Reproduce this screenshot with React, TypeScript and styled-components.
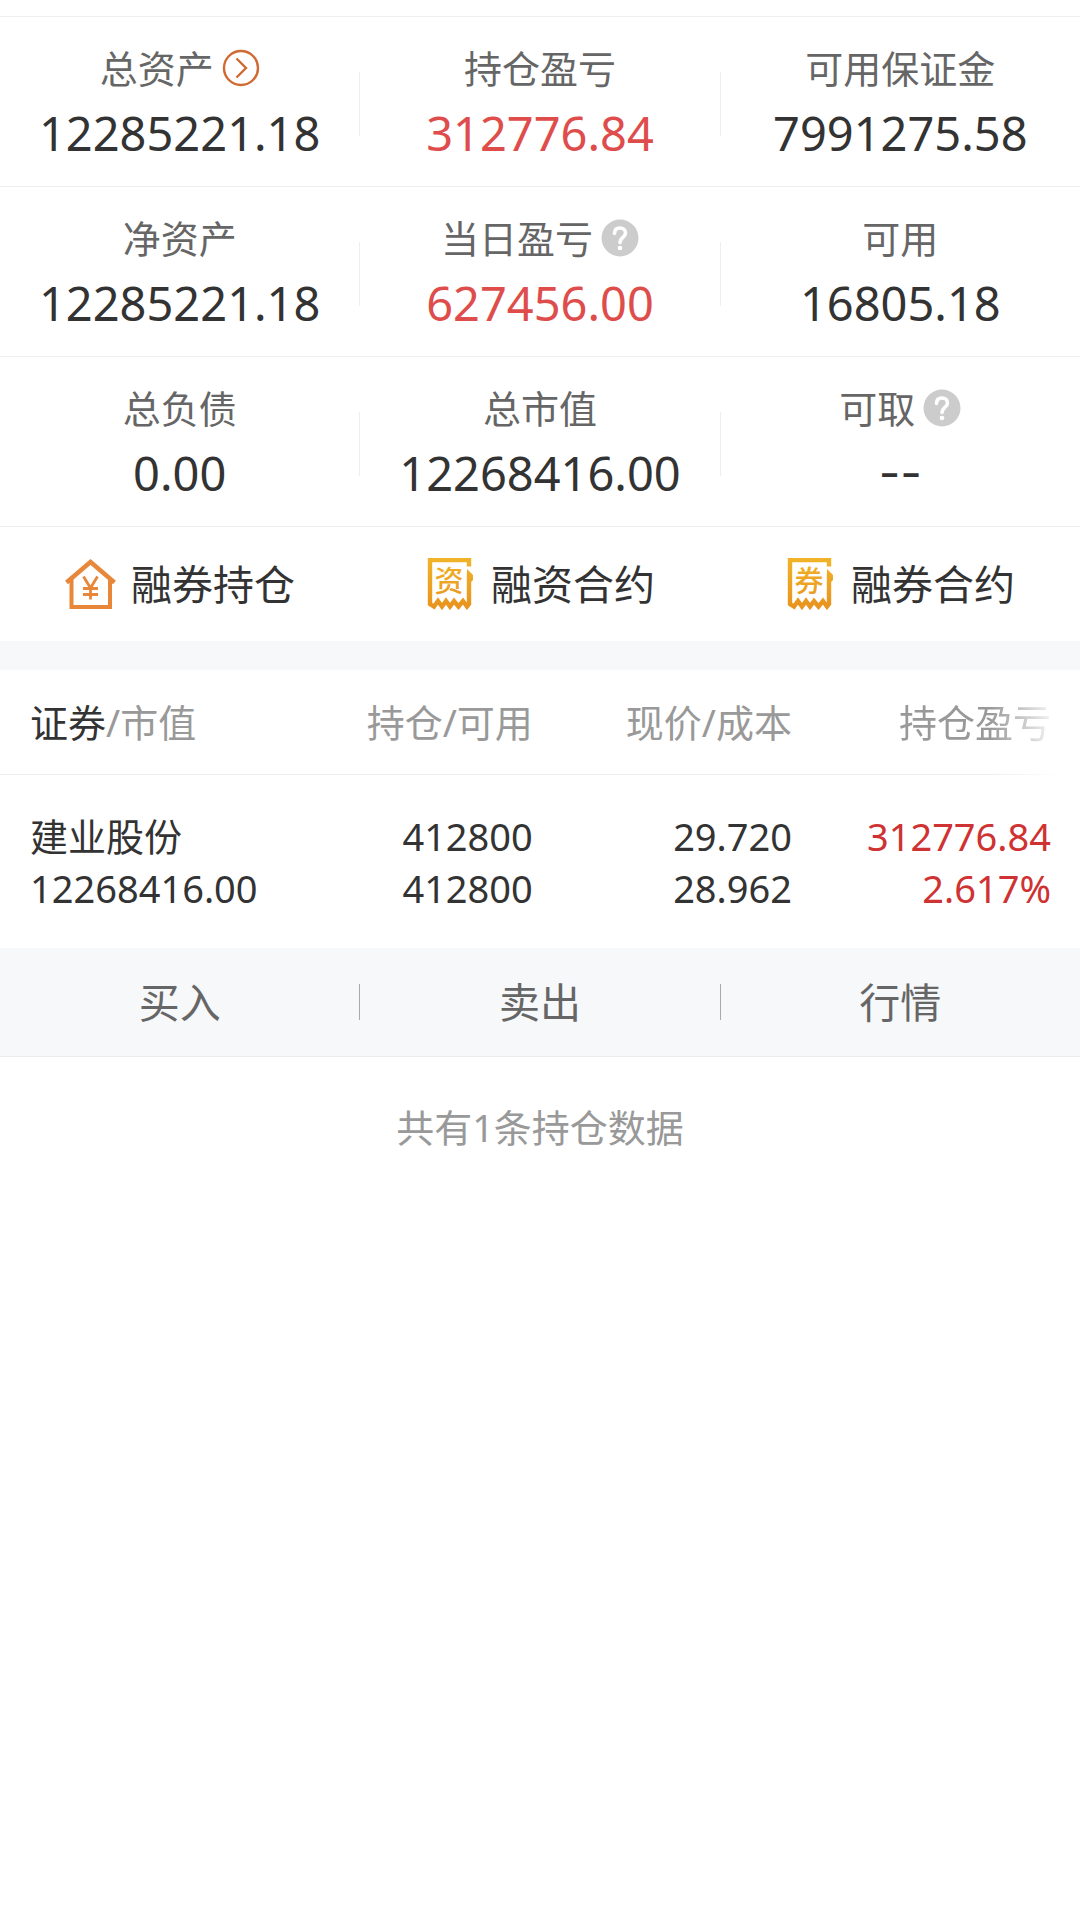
import React from "react";
import styled, { createGlobalStyle } from "styled-components";

const sans = `"Noto Sans", "Noto Sans CJK SC", sans-serif`;

const GlobalStyle = createGlobalStyle`
  *, *::before, *::after { box-sizing: border-box; }
  body {
    margin: 0;
    background: #fff;
    color: #333;
    font-family: ${sans};
    font-size: 38px;
    line-height: 44px;
  }
  button {
    margin: 0;
    padding: 0;
    border: 0;
    background: none;
    color: inherit;
    font: inherit;
    cursor: pointer;
  }
`;

const Page = styled.main`
  padding-top: 16px;
`;

const Summary = styled.section`
  border-top: 1px solid #eee;
`;

const ThreeColumns = styled.div`
  display: grid;
  grid-template-columns: 1fr 1px 1fr 1px 1fr;
  align-items: center;
`;

const StatRow = styled(ThreeColumns)`
  padding: 29px 0 25px;
  border-bottom: 1px solid #eee;
`;

const Divider = styled.span<{ $strong?: boolean }>`
  height: ${(p) => (p.$strong ? 36 : 64)}px;
  background: ${(p) => (p.$strong ? "#aaa" : "#eee")};
`;

const Stat = styled.div`
  display: flex;
  flex-direction: column;
  align-items: center;
  gap: 15px;
`;

const StatLabel = styled.div`
  display: flex;
  align-items: center;
  gap: 8px;
  color: #666;
`;

const LabelButton = styled.button`
  display: flex;
  align-items: center;
  gap: 8px;
`;

const IconButton = styled.button`
  display: flex;
`;

const StatValue = styled.div<{ $gain?: boolean; $empty?: boolean }>`
  color: ${(p) => (p.$gain ? "#de4d4b" : "#333")};
  font-family: ${(p) => (p.$empty ? "Inter, sans-serif" : sans)};
  font-size: 47px;
  line-height: 56px;
`;

const Shortcuts = styled.nav`
  display: grid;
  grid-template-columns: repeat(3, 1fr);
  padding: 31px 0;
  border-bottom: 29px solid #f7f8fa;
`;

const Shortcut = styled.button`
  display: flex;
  align-items: center;
  justify-content: center;
  gap: 14px;
  font-size: 41px;
  line-height: 52px;
`;

const Holdings = styled.table`
  width: 100%;
  table-layout: fixed;
  border-collapse: separate;
  border-spacing: 0;
`;

const HeadCell = styled.th<{ $width?: string; $first?: boolean; $faded?: boolean }>`
  width: ${(p) => p.$width ?? "auto"};
  padding: 30px 0;
  padding-left: ${(p) => (p.$first ? 30 : 0)}px;
  padding-right: ${(p) => (p.$faded ? 29 : 0)}px;
  border-bottom: 1px solid #eee;
  color: #999;
  font-weight: 400;
  text-align: ${(p) => (p.$first ? "left" : "right")};
  white-space: nowrap;
  mask-image: ${(p) =>
    p.$faded
      ? "linear-gradient(to right, #000 calc(100% - 90px), transparent calc(100% - 20px))"
      : "none"};
`;

const ActiveSort = styled.span`
  color: #333;
`;

const Cell = styled.td<{ $first?: boolean; $gain?: boolean }>`
  padding: 35px 0 34px;
  padding-left: ${(p) => (p.$first ? 30 : 0)}px;
  padding-right: ${(p) => (p.$gain ? 29 : 0)}px;
  color: ${(p) => (p.$gain ? "#cf3232" : "#333")};
  line-height: 52px;
  text-align: ${(p) => (p.$first ? "left" : "right")};
  white-space: nowrap;
`;

const Line = styled.div``;

const Actions = styled(ThreeColumns)`
  padding: 28px 0;
  background: #f7f8fa;
  border-bottom: 1px solid #e9ebee;
`;

const Action = styled.button`
  color: #666;
  font-size: 41px;
  line-height: 52px;
`;

const Footnote = styled.p`
  margin: 0;
  padding: 48px 30px;
  color: #999;
  text-align: center;
`;

function MoreIcon() {
  return (
    <svg width="38" height="38" viewBox="0 0 38 38" fill="none" stroke="#cf6a32" strokeWidth="2.400" aria-hidden="true">
      <circle cx="19" cy="19" r="17" />
      <path d="M14.500 9.500 24 19 14.500 28.500" />
    </svg>
  );
}

function HelpIcon() {
  return (
    <svg width="38" height="38" viewBox="0 0 38 38" fill="none" aria-hidden="true">
      <circle cx="19" cy="19" r="18.500" fill="#ccc" />
      <path d="M13.500 14.500c0-3.800 2.400-5.500 5.500-5.500s5.500 2 5.500 5c0 4.500-5.500 4.500-5.500 9.500" stroke="#fff" strokeWidth="3.600" strokeLinecap="round" />
      <circle cx="19" cy="29" r="2.300" fill="#fff" />
    </svg>
  );
}

function HouseIcon() {
  return (
    <svg width="52" height="52" viewBox="0 0 52 52" fill="none" stroke="#e8873a" aria-hidden="true">
      <path d="M1.500 24.500 25.500 4 49.500 24.500" strokeWidth="4.400" />
      <path d="M6.500 21V49H45V21" strokeWidth="4" />
      <path d="M18.500 18.500 25.500 30 32.500 18.500M25.500 29V41.500M18 30.500H33M18 36.500H33" strokeWidth="2.800" />
    </svg>
  );
}

const ReceiptMark = styled.text`
  font-family: "Noto Sans CJK SC", sans-serif;
  font-size: 29px;
  font-weight: 500;
`;

function ReceiptIcon({ id, mark }: { id: string; mark: string }) {
  return (
    <svg width="52" height="52" viewBox="0 0 52 52" fill="none" aria-hidden="true">
      <defs>
        <linearGradient id={id} gradientUnits="userSpaceOnUse" x1="0" y1="0" x2="0" y2="52">
          <stop offset="0" stopColor="#f0b428" />
          <stop offset="1" stopColor="#e8921e" />
        </linearGradient>
      </defs>
      <path
        d="M44 8.500V2H5V46L9 48.500 13 43 17 48.500 21 43 25 48.500 29 43 33.500 48.500 38 43 42 48.500 44 46V15"
        stroke={`url(#${id})`}
        strokeWidth="4.400"
      />
      <path d="M42 11 48 17V22L46 24H42Z" fill={`url(#${id})`} />
      <ReceiptMark x="24" y="34" textAnchor="middle" fill={`url(#${id})`}>
        {mark}
      </ReceiptMark>
    </svg>
  );
}

type StatItem = {
  label: string;
  value: string;
  gain?: boolean;
  more?: boolean;
  help?: boolean;
};

const stats: StatItem[][] = [
  [
    { label: "总资产", value: "12285221.18", more: true },
    { label: "持仓盈亏", value: "312776.84", gain: true },
    { label: "可用保证金", value: "7991275.58" },
  ],
  [
    { label: "净资产", value: "12285221.18" },
    { label: "当日盈亏", value: "627456.00", gain: true, help: true },
    { label: "可用", value: "16805.18" },
  ],
  [
    { label: "总负债", value: "0.00" },
    { label: "总市值", value: "12268416.00" },
    { label: "可取", value: "--", help: true },
  ],
];

function StatCell({ item }: { item: StatItem }) {
  return (
    <Stat>
      <StatLabel>
        {item.more ? (
          <LabelButton type="button">
            {item.label}
            <MoreIcon />
          </LabelButton>
        ) : (
          item.label
        )}
        {item.help && (
          <IconButton type="button" aria-label={item.label}>
            <HelpIcon />
          </IconButton>
        )}
      </StatLabel>
      <StatValue $gain={item.gain} $empty={item.value === "--"}>
        {item.value}
      </StatValue>
    </Stat>
  );
}

const actions = ["买入", "卖出", "行情"];

export default function App() {
  return (
    <>
      <GlobalStyle />
      <Page>
        <Summary>
          {stats.map((row) => (
            <StatRow key={row[0].label}>
              {row.map((item, i) => (
                <React.Fragment key={item.label}>
                  {i > 0 && <Divider />}
                  <StatCell item={item} />
                </React.Fragment>
              ))}
            </StatRow>
          ))}
        </Summary>

        <Shortcuts>
          <Shortcut type="button">
            <HouseIcon />
            融券持仓
          </Shortcut>
          <Shortcut type="button">
            <ReceiptIcon id="receipt-fund" mark="资" />
            融资合约
          </Shortcut>
          <Shortcut type="button">
            <ReceiptIcon id="receipt-stock" mark="券" />
            融券合约
          </Shortcut>
        </Shortcuts>

        <Holdings>
          <thead>
            <tr>
              <HeadCell scope="col" $first>
                <ActiveSort>证券</ActiveSort>/市值
              </HeadCell>
              <HeadCell scope="col" $width="24%">持仓/可用</HeadCell>
              <HeadCell scope="col" $width="24%">现价/成本</HeadCell>
              <HeadCell scope="col" $width="288px" $faded>持仓盈亏</HeadCell>
            </tr>
          </thead>
          <tbody>
            <tr>
              <Cell $first>
                <Line>建业股份</Line>
                <Line>12268416.00</Line>
              </Cell>
              <Cell>
                <Line>412800</Line>
                <Line>412800</Line>
              </Cell>
              <Cell>
                <Line>29.720</Line>
                <Line>28.962</Line>
              </Cell>
              <Cell $gain>
                <Line>312776.84</Line>
                <Line>2.617%</Line>
              </Cell>
            </tr>
          </tbody>
        </Holdings>

        <Actions>
          {actions.map((name, i) => (
            <React.Fragment key={name}>
              {i > 0 && <Divider $strong />}
              <Action type="button">{name}</Action>
            </React.Fragment>
          ))}
        </Actions>

        <Footnote>共有1条持仓数据</Footnote>
      </Page>
    </>
  );
}
